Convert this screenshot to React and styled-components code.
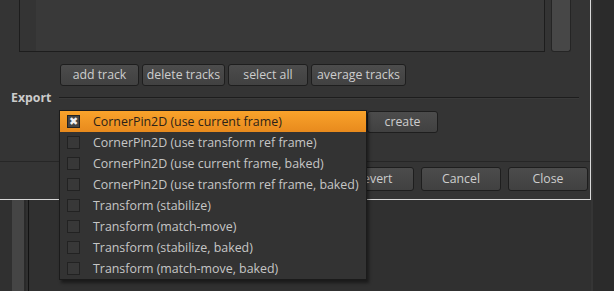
import React from "react";
import styled, { createGlobalStyle } from "styled-components";

const GlobalStyle = createGlobalStyle`
  html, body {
    margin: 0;
    padding: 0;
    background: #2f2f2f;
  }
  body {
    font-family: "Open Sans", "DejaVu Sans", sans-serif;
    font-size: 12px;
  }
`;

const Page = styled.div`
  width: 614px;
  height: 291px;
  overflow: hidden;
  position: relative;
  display: grid;
  grid-template-columns: 591px 1fr;
  grid-template-rows: 200px 1fr;
  background: #303030;
`;

const Dialog = styled.div`
  grid-column: 1;
  grid-row: 1;
  background: #343434;
  border-right: 1px solid #d8d8d8;
  border-bottom: 1px solid #d8d8d8;
  box-sizing: border-box;
  display: flex;
  flex-direction: column;
`;

const SideStrip = styled.div`
  grid-column: 2;
  grid-row: 1 / span 2;
  background: #2b2b2b;
  border-left: 2px solid #353535;
`;

const Below = styled.div`
  grid-column: 1;
  grid-row: 2;
  display: flex;
  padding-left: 12px;
`;

const PanelBar = styled.div`
  width: 12px;
  background: #454545;
  border-right: 2px solid #2a2a2a;
`;

const PanelEdge = styled.div`
  width: 1px;
  margin-left: 2px;
  background: #121212;
`;

const TopRow = styled.div`
  display: flex;
  height: 52px;
  padding-left: 19px;
`;

const TrackBox = styled.div`
  width: 524px;
  display: flex;
  border: 1px solid #1d1d1d;
  border-top: none;
  background: #393939;
`;

const Gutter = styled.div`
  width: 16px;
  background: #343434;
`;

const Scrollbar = styled.div`
  width: 18px;
  margin-left: 6px;
  height: 51px;
  background: #474747;
  border: 1px solid #252525;
  border-top: none;
  border-radius: 0 0 3px 3px;
`;

const ButtonRow = styled.div`
  display: flex;
  gap: 3px;
  margin-top: 12px;
  padding-left: 60px;
`;

const Button = styled.button`
  box-sizing: border-box;
  width: ${(p) => p.$w}px;
  height: ${(p) => p.$h || 22}px;
  padding: 0;
  border: 1px solid #1e1e1e;
  border-radius: 3px;
  background: linear-gradient(#4c4c4c, #414141);
  color: #cdcdcd;
  font-family: "Open Sans", "DejaVu Sans", sans-serif;
  font-size: 12.3px;
  line-height: 1;
  text-align: center;
`;

const ExportRow = styled.div`
  display: flex;
  align-items: center;
  height: 14px;
  margin-top: 4px;
  padding-left: 11px;
  padding-right: 11px;
`;

const ExportLabel = styled.span`
  font-weight: 700;
  color: #cbcbcb;
  font-size: 12.3px;
  width: 48px;
`;

const Rule = styled.div`
  flex: 1;
  height: 1px;
  background: #1d1d1d;
  box-shadow: 0 1px 0 #3a3a3a;
`;

const ComboRow = styled.div`
  display: flex;
  margin-top: 7px;
  padding-left: 60px;
`;

const Combo = styled.div`
  width: 307px;
  height: 22px;
  box-sizing: border-box;
  border: 1px solid #1e1e1e;
  background: #3c3c3c;
`;

const Footer = styled.div`
  margin-top: auto;
  height: 32px;
  border-top: 1px solid #262626;
  display: flex;
  justify-content: flex-end;
  align-items: flex-start;
  gap: 7px;
  padding: 5px 2px 0 0;
`;

const Popup = styled.div`
  position: absolute;
  left: 59px;
  top: 110px;
  width: 306px;
  border: 1px solid #1b1b1b;
  background: #333333;
  box-shadow: 2px 3px 3px rgba(0, 0, 0, 0.45);
  display: flex;
  flex-direction: column;
`;

const Item = styled.div`
  height: 21px;
  display: flex;
  align-items: center;
  padding-left: 7px;
  color: ${(p) => (p.$active ? "#2b2218" : "#c6c6c6")};
  background: ${(p) =>
    p.$active ? "linear-gradient(#f9a32b, #e88a1d)" : "transparent"};
  font-size: 12.4px;
  white-space: nowrap;
`;

const Check = styled.span`
  box-sizing: border-box;
  width: 13px;
  height: 13px;
  margin-right: 13px;
  border: 1px solid #222;
  background: ${(p) => (p.$on ? "#444444" : "#383838")};
  display: flex;
  align-items: center;
  justify-content: center;
  color: #f0f0f0;
  font-family: "DejaVu Sans", sans-serif;
  font-size: 11px;
  font-weight: 700;
  line-height: 1;
`;

const items = [
  "CornerPin2D (use current frame)",
  "CornerPin2D (use transform ref frame)",
  "CornerPin2D (use current frame, baked)",
  "CornerPin2D (use transform ref frame, baked)",
  "Transform (stabilize)",
  "Transform (match-move)",
  "Transform (stabilize, baked)",
  "Transform (match-move, baked)",
];

export default function App() {
  return (
    <>
      <GlobalStyle />
      <Page>
        <Dialog>
          <TopRow>
            <TrackBox>
              <Gutter />
            </TrackBox>
            <Scrollbar />
          </TopRow>
          <ButtonRow>
            <Button $w={79}>add track</Button>
            <Button $w={83}>delete tracks</Button>
            <Button $w={80}>select all</Button>
            <Button $w={95}>average tracks</Button>
          </ButtonRow>
          <ExportRow>
            <ExportLabel>Export</ExportLabel>
            <Rule />
          </ExportRow>
          <ComboRow>
            <Combo />
            <Button $w={71}>create</Button>
          </ComboRow>
          <Footer>
            <Button $w={80} $h={24}>Revert</Button>
            <Button $w={80} $h={24}>Cancel</Button>
            <Button $w={80} $h={24}>Close</Button>
          </Footer>
        </Dialog>
        <SideStrip />
        <Below>
          <PanelBar />
          <PanelEdge />
        </Below>
        <Popup>
          {items.map((label, i) => (
            <Item key={label} $active={i === 0}>
              <Check $on={i === 0}>{i === 0 ? "✖" : ""}</Check>
              {label}
            </Item>
          ))}
        </Popup>
      </Page>
    </>
  );
}
